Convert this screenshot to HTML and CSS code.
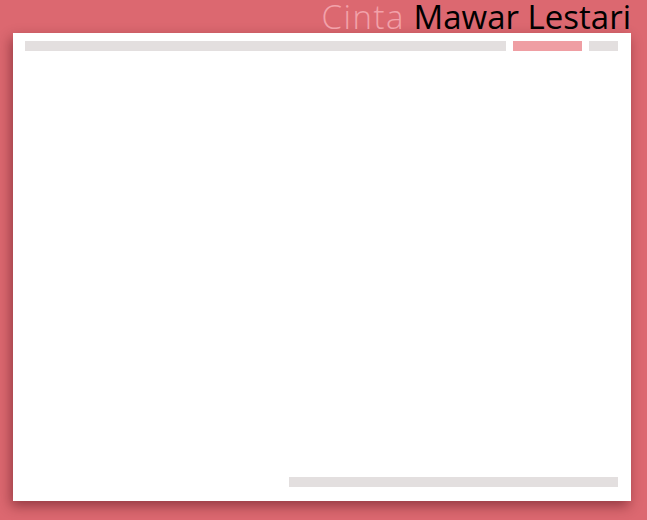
FILE: index.html
```html
<!DOCTYPE html>
<html>
<head>
<meta charset="utf-8">
<link rel="stylesheet" href="styles.css">
</head>
<body>
<header class="masthead">
  <h1 class="title"><span class="title-light">Cinta</span> Mawar Lestari</h1>
</header>
<main class="card">
  <div class="top-row">
    <div class="bar bar-main"></div>
    <div class="bar bar-accent"></div>
    <div class="bar bar-small"></div>
  </div>
  <div class="spacer"></div>
  <div class="bottom-row">
    <div class="bar bar-footer"></div>
  </div>
</main>
</body>
</html>
```

FILE: styles.css
```css
html, body {
  margin: 0;
  padding: 0;
  height: 100%;
}
body {
  background: #dc6870;
  overflow: hidden;
}
.masthead {
  display: flex;
  justify-content: flex-end;
  padding-right: 16px;
  height: 33px;
}
.title {
  margin: 0;
  font-family: "Open Sans", "DejaVu Sans", sans-serif;
  font-weight: 400;
  font-size: 33px;
  line-height: 33px;
  color: #000;
  letter-spacing: 0;
  white-space: nowrap;
}
.title-light {
  color: #f2a2aa;
  font-weight: 300;
  letter-spacing: 1.5px;
}
.card {
  margin: 0 16px 0 13px;
  height: 468px;
  box-sizing: border-box;
  background: #fff;
  padding: 8px 13px 14px 12px;
  display: flex;
  flex-direction: column;
  box-shadow: -2px 5px 12px rgba(60, 0, 10, 0.45);
}
.top-row {
  display: flex;
  gap: 7px;
}
.bar {
  height: 10px;
  background: #e3dfdf;
}
.bar-main { flex: 1; }
.bar-accent { width: 69px; background: #ef9ea3; }
.bar-small { width: 29px; }
.spacer { flex: 1; }
.bottom-row {
  display: flex;
  justify-content: flex-end;
}
.bar-footer { width: 329px; }
```
